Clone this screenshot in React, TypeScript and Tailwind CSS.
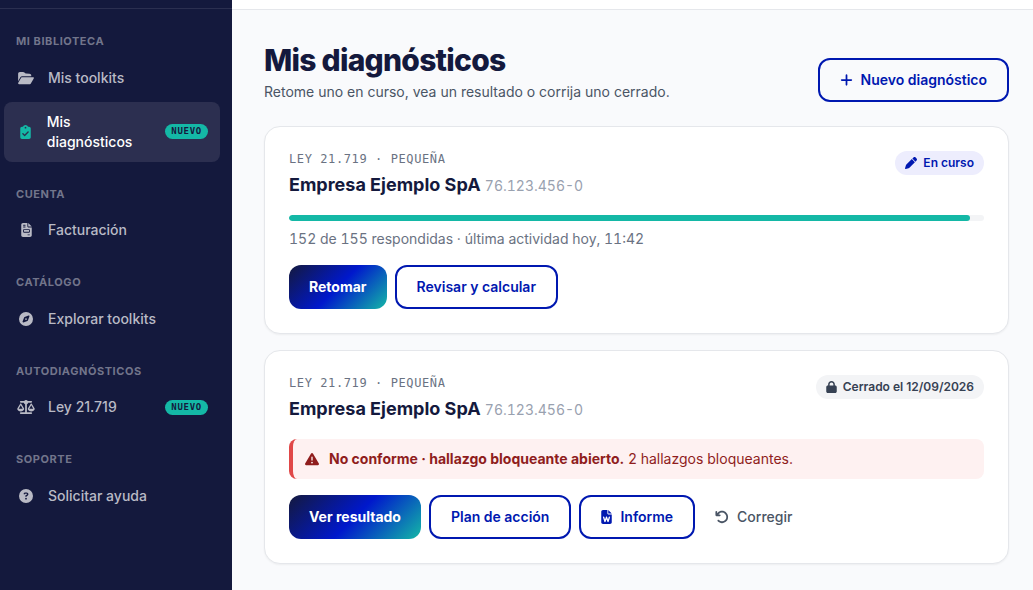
import type { ReactNode } from "react";
import { clsx } from "clsx";
import {
  FaArrowRotateLeft,
  FaCircleQuestion,
  FaCompass,
  FaFolderOpen,
  FaLock,
  FaPen,
  FaPlus,
  FaScaleBalanced,
  FaTriangleExclamation,
} from "react-icons/fa6";

interface IconProps {
  className?: string;
}

function ClipboardIcon({ className }: IconProps) {
  return (
    <svg viewBox="0 0 384 512" fill="currentColor" className={className} aria-hidden="true">
      <path d="M192 0c-41.8 0-77.4 26.7-90.5 64H64C28.7 64 0 92.7 0 128V448c0 35.3 28.7 64 64 64H320c35.3 0 64-28.7 64-64V128c0-35.3-28.7-64-64-64H282.5C269.4 26.7 233.8 0 192 0zm0 64a32 32 0 1 1 0 64 32 32 0 1 1 0-64zM305 273L177 401c-9.4 9.4-24.6 9.4-33.9 0L79 337c-9.4-9.4-9.4-24.6 0-33.9s24.6-9.4 33.9 0l47 47L271 239c9.4-9.4 24.6-9.4 33.9 0s9.4 24.6 0 33.9z" />
    </svg>
  );
}

function InvoiceIcon({ className }: IconProps) {
  return (
    <svg viewBox="0 0 384 512" fill="currentColor" className={className} aria-hidden="true">
      <path d="M64 0C28.7 0 0 28.7 0 64V448c0 35.3 28.7 64 64 64H320c35.3 0 64-28.7 64-64V160H256c-17.7 0-32-14.3-32-32V0H64zM256 0V128H384L256 0zM80 64h64c8.8 0 16 7.2 16 16s-7.2 16-16 16H80c-8.8 0-16-7.2-16-16s7.2-16 16-16zm0 64h64c8.8 0 16 7.2 16 16s-7.2 16-16 16H80c-8.8 0-16-7.2-16-16s7.2-16 16-16zm16 96H288c17.7 0 32 14.3 32 32v64c0 17.7-14.3 32-32 32H96c-17.7 0-32-14.3-32-32V256c0-17.7 14.3-32 32-32zm0 32v64H288V256H96zM240 416h64c8.8 0 16 7.2 16 16s-7.2 16-16 16H240c-8.8 0-16-7.2-16-16s7.2-16 16-16z" />
    </svg>
  );
}

function WordFileIcon({ className }: IconProps) {
  return (
    <svg viewBox="0 0 384 512" fill="currentColor" className={className} aria-hidden="true">
      <path d="M64 0C28.7 0 0 28.7 0 64V448c0 35.3 28.7 64 64 64H320c35.3 0 64-28.7 64-64V160H256c-17.7 0-32-14.3-32-32V0H64zM256 0V128H384L256 0zM111 257.1l26.8 89.2 31.6-90.3c3.4-9.6 12.5-16.1 22.7-16.1s19.3 6.4 22.7 16.1l31.6 90.3L273 257.1c3.8-12.7 17.2-19.9 29.9-16.1s19.9 17.2 16.1 29.9l-48 160c-3 10-12 16.9-22.4 17.1s-19.8-6.2-23.2-16.1L192 336.6l-33.3 95.3c-3.4 9.8-12.8 16.3-23.2 16.1s-19.5-7.1-22.4-17.1l-48-160c-3.8-12.7 3.4-26.2 16.1-29.9s26.2 3.4 29.9 16.1z" />
    </svg>
  );
}

interface NavItem {
  label: string;
  icon: ReactNode;
  active?: boolean;
  isNew?: boolean;
}

const NAV: { title: string; items: NavItem[] }[] = [
  {
    title: "Mi biblioteca",
    items: [
      { label: "Mis toolkits", icon: <FaFolderOpen className="h-3.5 w-4 shrink-0" /> },
      {
        label: "Mis diagnósticos",
        icon: <ClipboardIcon className="h-3.5 w-[11px] shrink-0" />,
        active: true,
        isNew: true,
      },
    ],
  },
  {
    title: "Cuenta",
    items: [{ label: "Facturación", icon: <InvoiceIcon className="h-3.5 w-[11px] shrink-0" /> }],
  },
  {
    title: "Catálogo",
    items: [{ label: "Explorar toolkits", icon: <FaCompass className="size-3.5 shrink-0" /> }],
  },
  {
    title: "Autodiagnósticos",
    items: [
      { label: "Ley 21.719", icon: <FaScaleBalanced className="h-3.5 w-[18px] shrink-0" />, isNew: true },
    ],
  },
  {
    title: "Soporte",
    items: [{ label: "Solicitar ayuda", icon: <FaCircleQuestion className="size-3.5 shrink-0" /> }],
  },
];

function NavLink({ item }: { item: NavItem }) {
  return (
    <a
      href="#"
      aria-current={item.active ? "page" : undefined}
      className={clsx(
        "flex items-center gap-3 rounded-lg px-3 py-2.5 text-sm leading-5 font-medium",
        item.active ? "bg-[#2c2f50] text-white" : "text-[#b9bac5]"
      )}
    >
      <span className={clsx("flex w-5 justify-center", item.active && "text-[#14b8a6]")}>{item.icon}</span>
      <span>{item.label}</span>
      {item.isNew && (
        <span className="ml-auto rounded-full bg-[#14b8a6] px-1.5 font-['DejaVu_Sans_Mono',monospace] text-[9px] leading-[15px] font-bold tracking-[0.08em] text-[#14193d]">
          NUEVO
        </span>
      )}
    </a>
  );
}

function Sidebar() {
  return (
    <aside className="w-58 shrink-0 bg-[#14193d] pt-2">
      <nav className="flex flex-col gap-6 border-t border-[#2b2f50] pt-6 pr-3 pl-1">
        {NAV.map((section) => (
          <div key={section.title}>
            <h2 className="mb-2 px-3 text-[11px] leading-normal font-bold tracking-wider text-[#72758b] uppercase">
              {section.title}
            </h2>
            <div className="flex flex-col gap-1">
              {section.items.map((item) => (
                <NavLink key={item.label} item={item} />
              ))}
            </div>
          </div>
        ))}
      </nav>
    </aside>
  );
}

interface ButtonProps {
  variant: "primary" | "outline" | "ghost";
  icon?: ReactNode;
  children: ReactNode;
}

function Button({ variant, icon, children }: ButtonProps) {
  return (
    <button
      type="button"
      className={clsx(
        "inline-flex h-11 items-center justify-center gap-2 rounded-xl text-sm whitespace-nowrap",
        variant === "primary" &&
          "bg-[linear-gradient(135deg,#14193d_0%,#0018cc_50%,#14b8a6_100%)] px-5 font-bold text-white",
        variant === "outline" && "border-2 border-[#0018b0] px-5 font-semibold text-[#0018b0]",
        variant === "ghost" && "px-3 font-medium text-gray-600"
      )}
    >
      {icon}
      {children}
    </button>
  );
}

interface DiagnosisCardProps {
  status: ReactNode;
  children: ReactNode;
  actions: ReactNode;
}

function DiagnosisCard({ status, children, actions }: DiagnosisCardProps) {
  return (
    <article className="rounded-2xl border border-gray-200 bg-white p-6 shadow-xs">
      <div className="mb-4 flex items-start justify-between gap-4">
        <div>
          <p className="mb-1 font-['DejaVu_Sans_Mono',monospace] text-xs leading-4 tracking-wider text-gray-500 uppercase">
            Ley 21.719 · Pequeña
          </p>
          <h2 className="text-lg leading-7 font-bold text-[#14193d]">
            Empresa Ejemplo SpA{" "}
            <span className="text-sm font-normal text-gray-400 tabular-nums">76.123.456-0</span>
          </h2>
        </div>
        {status}
      </div>
      {children}
      <div className="mt-4 flex flex-wrap gap-2">{actions}</div>
    </article>
  );
}

function StatusPill({ className, children }: { className: string; children: ReactNode }) {
  return (
    <span
      className={clsx(
        "inline-flex h-6 shrink-0 items-center gap-1.5 rounded-full px-2.5 text-xs font-semibold",
        className
      )}
    >
      {children}
    </span>
  );
}

export default function App() {
  const answered = 152;
  const total = 155;

  return (
    <div className="flex min-h-screen bg-[#f9fafc] font-['Inter',sans-serif]">
      <Sidebar />
      <div className="min-w-0 flex-1">
        <div className="h-2.5 border-b border-gray-200 bg-white" />
        <main className="pt-8 pr-6 pb-6 pl-8">
          <header className="mb-6 flex items-end justify-between gap-4">
            <div>
              <h1 className="text-3xl leading-9 font-extrabold tracking-tight text-[#14193d]">
                Mis diagnósticos
              </h1>
              <p className="mt-1 text-sm leading-5 text-gray-600">
                Retome uno en curso, vea un resultado o corrija uno cerrado.
              </p>
            </div>
            <Button variant="outline" icon={<FaPlus className="h-3.5 w-[13px]" />}>
              Nuevo diagnóstico
            </Button>
          </header>

          <div className="flex flex-col gap-4">
            <DiagnosisCard
              status={
                <StatusPill className="bg-[#ededfd] text-[#0018b0]">
                  <FaPen className="size-3" />
                  En curso
                </StatusPill>
              }
              actions={
                <>
                  <Button variant="primary">Retomar</Button>
                  <Button variant="outline">Revisar y calcular</Button>
                </>
              }
            >
              <div className="h-1.5 overflow-hidden rounded-full bg-gray-100">
                <div
                  className="h-full rounded-full bg-[#14b8a6]"
                  style={{ width: `${Math.round((answered / total) * 100)}%` }}
                />
              </div>
              <p className="mt-2 text-sm leading-5 text-gray-500 tabular-nums">
                {answered} de {total} respondidas · última actividad hoy, 11:42
              </p>
            </DiagnosisCard>

            <DiagnosisCard
              status={
                <StatusPill className="bg-gray-100 text-gray-700">
                  <FaLock className="h-3 w-[11px]" />
                  Cerrado el 12/09/2026
                </StatusPill>
              }
              actions={
                <>
                  <Button variant="primary">Ver resultado</Button>
                  <Button variant="outline">Plan de acción</Button>
                  <Button variant="outline" icon={<WordFileIcon className="h-3.5 w-[11px]" />}>
                    Informe
                  </Button>
                  <Button variant="ghost" icon={<FaArrowRotateLeft className="size-3.5" />}>
                    Corregir
                  </Button>
                </>
              }
            >
              <div className="flex items-center gap-2.5 rounded-lg border-l-4 border-[#e04848] bg-[#fef1f1] px-3 py-2.5 text-sm leading-5 text-[#8f1d1d]">
                <FaTriangleExclamation className="size-3.5 shrink-0" />
                <p>
                  <strong className="font-bold">No conforme · hallazgo bloqueante abierto.</strong> 2 hallazgos
                  bloqueantes.
                </p>
              </div>
            </DiagnosisCard>
          </div>
        </main>
      </div>
    </div>
  );
}
